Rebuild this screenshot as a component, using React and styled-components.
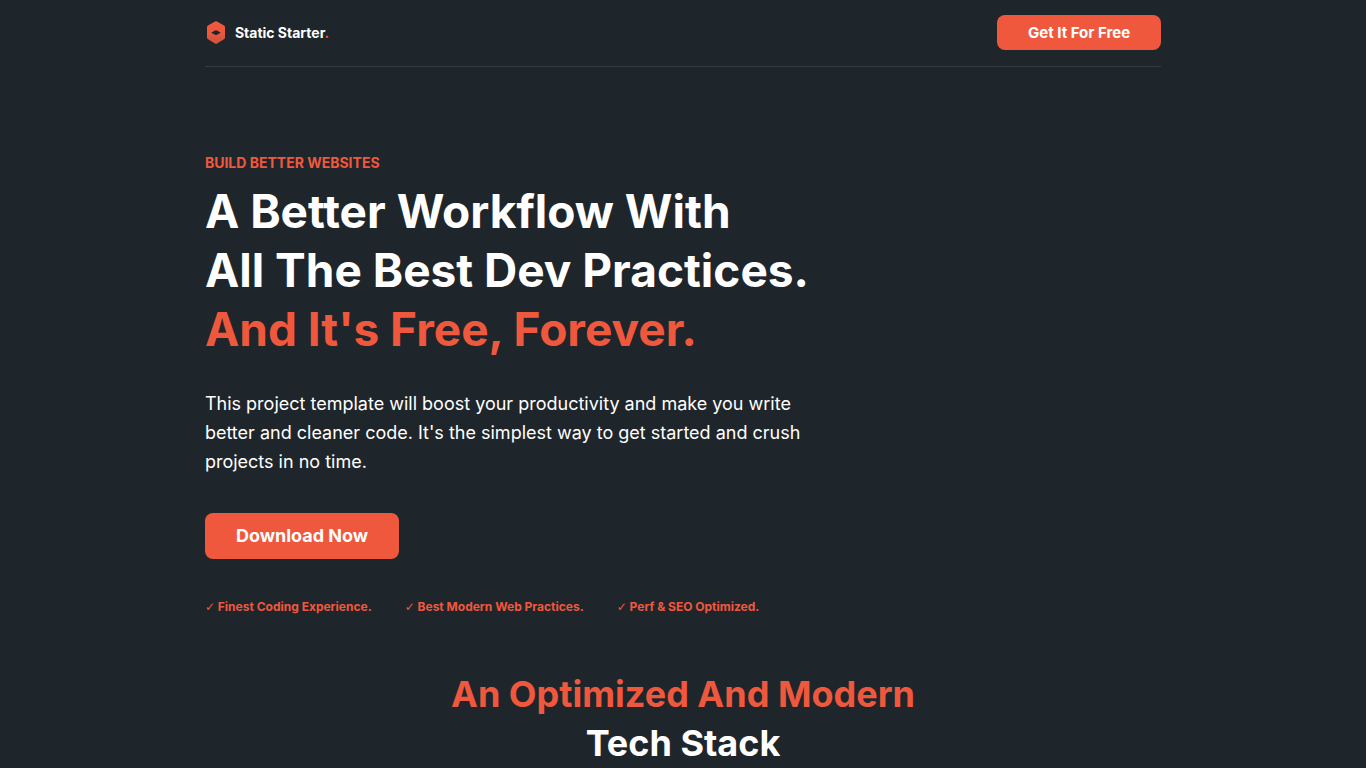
import React from 'react';
import styled, { createGlobalStyle } from 'styled-components';

const GlobalStyle = createGlobalStyle`
  :root {
    --primary: #f0583e;
    --background: #1f262b;
    --border: #353d43;
    --text: #ffffff;
  }

  *,
  *::before,
  *::after {
    box-sizing: border-box;
  }

  html {
    scrollbar-width: none;
  }

  body {
    margin: 0;
    background: var(--background);
    color: var(--text);
    font-family: Inter, 'Liberation Sans', sans-serif;
  }
`;

const Container = styled.div`
  width: 70%;
  margin: 0 auto;

  @media screen and (max-width: 900px) {
    width: 90%;
  }
`;

const Header = styled.header`
  display: flex;
  align-items: center;
  justify-content: space-between;
  padding: 15px 0 16px;
  border-bottom: 1px solid var(--border);
`;

const Brand = styled.a`
  display: flex;
  align-items: center;
  gap: 8px;
  color: var(--text);
  font-size: 14px;
  font-weight: 700;
  line-height: 24px;
  text-decoration: none;
`;

const Accent = styled.span`
  color: var(--primary);
`;

const Button = styled.button`
  padding: ${(props) => (props.$large ? '8px 31px' : '5px 31px')};
  border: none;
  border-radius: 8px;
  background: var(--primary);
  color: var(--text);
  font-family: inherit;
  font-size: ${(props) => (props.$large ? '18px' : '15px')};
  font-weight: 700;
  line-height: ${(props) => (props.$large ? '30px' : '25px')};
  cursor: pointer;
`;

const Hero = styled.section`
  padding: 84px 0 53px;
`;

const Eyebrow = styled.p`
  margin: 0 0 7px;
  color: var(--primary);
  font-size: 14px;
  font-weight: 700;
  line-height: 24px;
  text-transform: uppercase;
`;

const Title = styled.h1`
  margin: 0 0 30px;
  font-size: 46px;
  font-weight: 700;
  line-height: 59px;
`;

const Lead = styled.p`
  max-width: 620px;
  margin: 0 0 37px;
  font-size: 18px;
  font-weight: 400;
  line-height: 29px;
`;

const Features = styled.ul`
  display: flex;
  flex-wrap: wrap;
  gap: 8px 33px;
  margin: 38px 0 0;
  padding: 0;
  list-style: none;
  color: var(--primary);
  font-size: 12px;
  font-weight: 700;
  line-height: 20px;
`;

const Check = styled.span`
  font-family: 'DejaVu Sans', sans-serif;
  font-weight: 400;
`;

const Stack = styled.section`
  padding-bottom: 80px;
  text-align: center;
`;

const SectionTitle = styled.h2`
  margin: 0;
  font-size: 36px;
  font-weight: 700;
  line-height: 49px;
`;

const features = [
  'Finest Coding Experience.',
  'Best Modern Web Practices.',
  'Perf & SEO Optimized.'
];

const Logo = () => (
  <svg width="22" height="24" viewBox="0 0 22 24" aria-hidden="true">
    <defs>
      <linearGradient id="logo-shade" x1="0" y1="0" x2="0" y2="1">
        <stop offset="0.5" stopColor="#f0583e" />
        <stop offset="0.75" stopColor="#d9543d" />
      </linearGradient>
    </defs>
    <path
      d="M10 .5Q11 -.1 12 .5L19 4.5Q20 5.1 20 6.3V16.5Q20 17.6 19 18.2L12 22.5Q11 23.1 10 22.5L3 18.2Q2 17.6 2 16.5V6.3Q2 5.1 3 4.5Z"
      fill="url(#logo-shade)"
    />
    <path d="M6.2 11.7L10 9.5Q11 8.9 12 9.5L15.8 11.7L12 13.7Q11 14.2 10 13.7Z" fill="#1f262b" />
  </svg>
);

const App = () => {
  return (
    <>
      <GlobalStyle />
      <Container>
        <Header>
          <Brand href="#">
            <Logo />
            <span>Static Starter<Accent>.</Accent></span>
          </Brand>
          <Button type="button">Get It For Free</Button>
        </Header>

        <main>
          <Hero>
            <Eyebrow>Build Better Websites</Eyebrow>
            <Title>
              A Better Workflow With<br />
              All The Best Dev Practices.<br />
              <Accent>And It's Free, Forever.</Accent>
            </Title>
            <Lead>
              This project template will boost your productivity and make you write
              better and cleaner code. It's the simplest way to get started and crush
              projects in no time.
            </Lead>
            <Button type="button" $large>Download Now</Button>
            <Features>
              {features.map((feature) => (
                <li key={feature}><Check>✓</Check> {feature}</li>
              ))}
            </Features>
          </Hero>

          <Stack>
            <SectionTitle>
              <Accent>An Optimized And Modern</Accent><br />
              Tech Stack
            </SectionTitle>
          </Stack>
        </main>
      </Container>
    </>
  );
};

export default App;
